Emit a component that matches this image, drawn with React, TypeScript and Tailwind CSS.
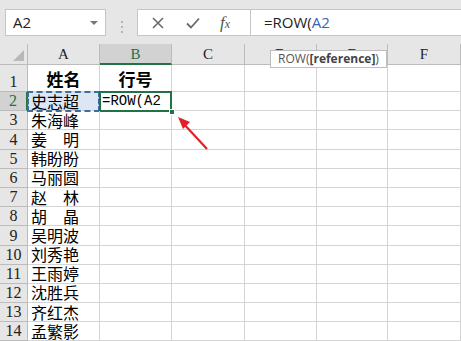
import React from 'react'

const cols = ['A', 'B', 'C', 'D', 'E', 'F']
const names = ['史志超', '朱海峰', '姜　明', '韩盼盼', '马丽圆', '赵　林', '胡　晶', '吴明波', '刘秀艳', '王雨婷', '沈胜兵', '齐红杰', '孟繁影']

const serif = { fontFamily: '"Liberation Serif", "Noto Sans CJK SC", serif' }
const cjk = { fontFamily: '"Noto Sans CJK SC", sans-serif' }

export default function App() {
  return (
    <div className="relative w-[461px] h-[341px] overflow-hidden bg-white select-none">
      {/* formula bar */}
      <div className="flex h-[44px] bg-[#e6e6e6] pt-[9px] pl-[5px]">
        <div className="flex h-[27px] w-[101px] items-center justify-between border border-[#c6c6c6] bg-white pl-[7px] pr-[7px]">
          <span className="text-[15px] text-[#222]" style={{ fontFamily: '"Open Sans", sans-serif' }}>A2</span>
          <span className="h-0 w-0 border-x-[4px] border-t-[4px] border-x-transparent border-t-[#777]" />
        </div>
        <div className="flex w-[31px] flex-col items-center justify-center gap-[3px]">
          <span className="h-[2px] w-[2px] bg-[#b5b5b5]" />
          <span className="h-[2px] w-[2px] bg-[#b5b5b5]" />
          <span className="h-[2px] w-[2px] bg-[#b5b5b5]" />
        </div>
        <div className="flex h-[27px] flex-1 items-center border border-r-0 border-[#c6c6c6] bg-white">
          <div className="flex w-[112px] items-center">
            <svg width="12" height="12" viewBox="0 0 12 12" className="ml-[14px]">
              <path d="M1 1L11 11M11 1L1 11" stroke="#6a6a6a" strokeWidth="1.6" />
            </svg>
            <svg width="14" height="12" viewBox="0 0 14 12" className="ml-[22px]">
              <path d="M1 6.5L5 10.5L13 1.5" stroke="#6a6a6a" strokeWidth="1.8" fill="none" />
            </svg>
            <span className="ml-[20px] text-[17px] italic leading-none text-[#555]" style={serif}>
              f<span className="text-[12px]">x</span>
            </span>
          </div>
          <div className="h-[27px] w-px bg-[#c6c6c6]" />
          <div className="pl-[13px] text-[15px] text-[#222]" style={{ fontFamily: '"Open Sans", sans-serif' }}>
            =ROW(<span className="text-[#3b62b8]">A2</span>
          </div>
        </div>
      </div>

      {/* grid */}
      <div
        className="grid grid-cols-[28px_72px_72px_73px_72px_71px_73px]"
        style={{ gridTemplateRows: '21px 27px repeat(13, 19.2px)' }}
      >
        <div className="relative border-r border-b border-[#bcbcbc] bg-[#e6e6e6]">
          <svg className="absolute right-[3px] bottom-[3px]" width="11" height="11" viewBox="0 0 11 11">
            <path d="M11 0V11H0Z" fill="#b8b8b8" />
          </svg>
        </div>
        {cols.map(c => (
          <div
            key={c}
            className={
              c === 'B'
                ? 'flex items-center justify-center border-r border-b-2 border-r-[#bcbcbc] border-b-[#217346] bg-[#d2d2d2] pt-[2px] text-[15px] text-[#217346]'
                : 'flex items-center justify-center border-r border-b border-[#bcbcbc] bg-[#e6e6e6] text-[15px] text-[#222]'
            }
            style={serif}
          >
            {c}
          </div>
        ))}

        {Array.from({ length: 14 }, (_, i) => {
          const r = i + 1
          const sel = r === 2
          return (
            <React.Fragment key={r}>
              <div
                className={
                  sel
                    ? 'flex items-end justify-center border-r-2 border-b border-r-[#217346] border-b-[#bcbcbc] bg-[#d2d2d2] text-[16px] leading-[19px] text-[#217346]'
                    : 'flex items-end justify-center border-r border-b border-[#bcbcbc] bg-[#e6e6e6] text-[16px] leading-[19px] text-[#222]'
                }
                style={serif}
              >
                {r}
              </div>
              {/* A */}
              {r === 1 ? (
                <div className="flex items-end justify-center border-r border-b border-[#d4d4d4] text-[17px] font-bold leading-[24px] text-black" style={cjk}>
                  姓名
                </div>
              ) : (
                <div
                  className={
                    'relative flex items-center whitespace-nowrap border-r border-b border-[#d4d4d4] pl-[3px] text-[16px] leading-[19px] text-black ' +
                    (sel ? 'bg-[#dce6f4]' : '')
                  }
                  style={cjk}
                >
                  {names[r - 2]}
                  {sel && (
                    <span className="pointer-events-none absolute inset-x-[-1px] top-[-1px] bottom-[-2px] border-2 border-dashed border-[#3c6e9e]" />
                  )}
                </div>
              )}
              {/* B */}
              {r === 1 ? (
                <div className="flex items-end justify-center border-r border-b border-[#d4d4d4] pb-px text-[17px] font-bold leading-[22px] text-black" style={cjk}>
                  行号
                </div>
              ) : sel ? (
                <div className="relative flex items-center whitespace-nowrap border-r border-b border-[#d4d4d4] pl-[2px] text-[14px] text-black" style={{ fontFamily: '"Liberation Mono", monospace' }}>
                  =ROW(A2
                  <span className="pointer-events-none absolute inset-x-[-1px] top-[-1px] bottom-[-2px] border-2 border-[#217346]" />
                  <span className="absolute right-[-4px] bottom-[-5px] h-[6px] w-[6px] border border-white bg-[#217346]" />
                </div>
              ) : (
                <div className="border-r border-b border-[#d4d4d4]" />
              )}
              {[0, 1, 2, 3].map(k => (
                <div key={k} className="border-r border-b border-[#d4d4d4]" />
              ))}
            </React.Fragment>
          )
        })}
      </div>

      {/* function tooltip */}
      <div
        className="absolute left-[270px] top-[50px] flex h-[18px] w-[117px] items-center justify-center whitespace-nowrap border border-[#bdbdbd] bg-white text-[12px] text-[#555]"
        style={{ fontFamily: '"Open Sans", sans-serif' }}
      >
        ROW(<b className="text-[#444]">[reference]</b>)
      </div>

      {/* red arrow */}
      <svg className="absolute left-[170px] top-[110px]" width="45" height="45" viewBox="0 0 45 45">
        <path d="M37 39L12 12" stroke="#e0202a" strokeWidth="2.2" />
        <path d="M8 7L20 12L13 19Z" fill="#e0202a" />
      </svg>
    </div>
  )
}
